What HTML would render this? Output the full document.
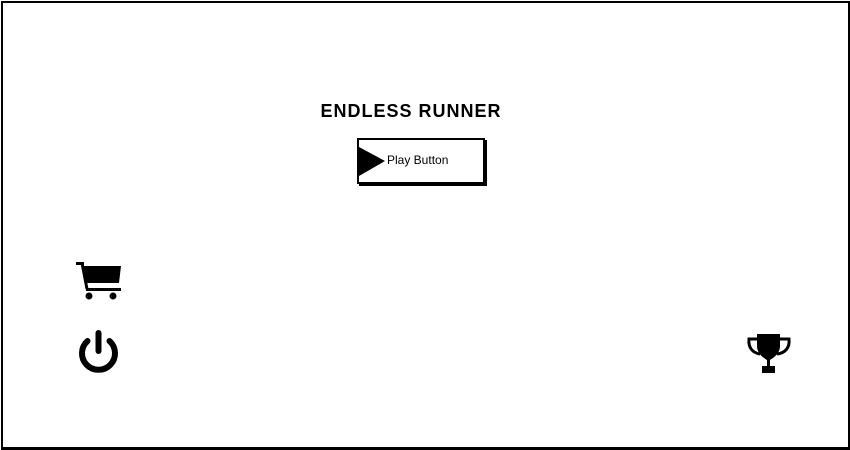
<!DOCTYPE html>
<html><head><meta charset="utf-8"><style>
html,body{margin:0;padding:0;background:#fff;}
body{width:850px;height:450px;position:relative;overflow:hidden;font-family:"Liberation Sans",sans-serif;}
.frame{position:absolute;left:1px;top:1px;width:845px;height:444px;border:2px solid #000;border-right-width:3px;border-bottom-width:3px;}
.title{position:absolute;left:312px;top:101px;width:198px;text-align:center;font-weight:bold;font-size:18px;letter-spacing:1px;color:#000;}
.btn{position:absolute;left:357px;top:138px;width:124px;height:42px;border:2px solid #000;background:#fff;box-shadow:2px 2px 0 #000;}
.btnt{position:absolute;left:387px;top:153px;font-size:12px;color:#000;}
</style></head><body>
<div class="frame"></div>
<div class="title">ENDLESS RUNNER</div>
<div class="btn"></div>
<svg style="position:absolute;left:0;top:0" width="850" height="450">
<polygon points="359,147 385,161 359,176" fill="#000"/>
<rect x="76" y="262" width="8" height="3" fill="#000"/>
<line x1="82" y1="263" x2="87" y2="289" stroke="#000" stroke-width="3"/>
<polygon points="83,266 121,266 119,283 86,283" fill="#000"/>
<rect x="86" y="288" width="35" height="3" fill="#000"/>
<circle cx="89" cy="296" r="3.5" fill="#000"/>
<circle cx="113" cy="296" r="3.5" fill="#000"/>
<path d="M87.5,341 A16.5,16.5 0 1 0 109.5,341" fill="none" stroke="#000" stroke-width="6" stroke-linecap="round"/>
<line x1="98.5" y1="333" x2="98.5" y2="351" stroke="#000" stroke-width="6" stroke-linecap="round"/>
<path d="M757,334 H780 V346 C780,354 773,358 770,360 V366 H775 V373 H762 V366 H767 V360 C764,358 757,354 757,346 Z" fill="#000"/>
<path d="M757,339 H749 C748,348 753,353 760,354" fill="none" stroke="#000" stroke-width="3"/>
<path d="M780,339 H789 C790,348 785,353 777,354" fill="none" stroke="#000" stroke-width="3"/>
</svg>
<div class="btnt">Play Button</div>
</body></html>
